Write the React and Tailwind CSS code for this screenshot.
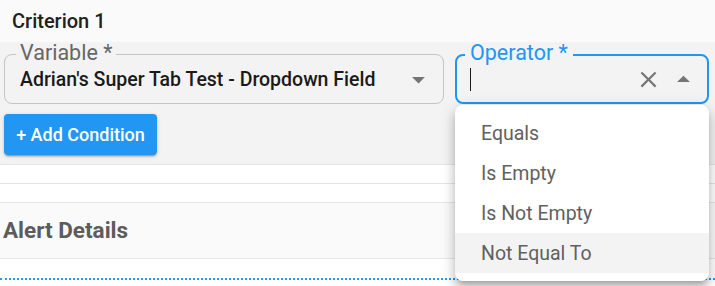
import React from "react";

const CloseIcon = () => (
  <svg width="27" height="27" viewBox="0 0 24 24" fill="#757575">
    <path d="M19 6.41 17.59 5 12 10.59 6.41 5 5 6.41 10.59 12 5 17.59 6.41 19 12 13.41 17.59 19 19 17.59 13.41 12z" />
  </svg>
);

const ArrowUp = () => (
  <svg width="31" height="31" viewBox="0 0 24 24" fill="#757575">
    <path d="m7 14 5-5 5 5z" />
  </svg>
);

const ArrowDown = () => (
  <svg width="31" height="31" viewBox="0 0 24 24" fill="#757575">
    <path d="M7 10l5 5 5-5z" />
  </svg>
);

export default function App() {
  const items = ["Equals", "Is Empty", "Is Not Empty", "Not Equal To"];
  return (
    <div className="relative w-[715px] h-[286px] overflow-hidden bg-white font-['Roboto',sans-serif]">
      <div className="h-[42px] bg-[#fafafa] flex items-center pl-[12px] text-[20px] font-medium text-[#212121]">
        Criterion 1
      </div>
      <div className="bg-[#f3f3f3] h-[123px] px-[4px] pt-[12px] border-b border-[#e6e6e6]">
        <div className="flex gap-[11px]">
          <div className="relative w-[440px] h-[50px] rounded-[8px] border border-[#c4c4c4] flex items-center pl-[15px] pr-[9px]">
            <span className="absolute left-[11px] top-[-13px] px-[4px] bg-[#f3f3f3] text-[21.5px] leading-[22px] text-[#666666]">
              Variable *
            </span>
            <span className="flex-1 text-[19.5px] font-medium text-[#1a1a1a] pt-[2px]">
              Adrian's Super Tab Test - Dropdown Field
            </span>
            <ArrowDown />
          </div>
          <div className="relative w-[254px] h-[50px] rounded-[8px] border-2 border-[#2196f3] flex items-center pl-[13px] pr-[8px]">
            <span className="absolute left-[8px] top-[-14px] px-[5px] bg-[#f3f3f3] text-[21.5px] leading-[22px] text-[#2196f3]">
              Operator *
            </span>
            <div className="w-px h-[23px] bg-[#1a1a1a] mt-[1px]" />
            <div className="flex-1" />
            <CloseIcon />
            <div className="w-[6px]" />
            <ArrowUp />
          </div>
        </div>
        <button className="mt-[10px] h-[41px] w-[153px] rounded-[4px] bg-[#2196f3] text-white text-[18px] font-medium flex items-center justify-center shadow-[0_3px_1px_-2px_rgba(0,0,0,0.2),0_2px_2px_0_rgba(0,0,0,0.14),0_1px_5px_0_rgba(0,0,0,0.12)]">
          + Add Condition
        </button>
      </div>
      <div className="h-[19px] border-b border-[#e6e6e6]" />
      <div className="h-[19px] border-b border-[#e6e6e6]" />
      <div className="h-[56px] bg-[#fafafa] border-b border-[#e6e6e6] flex items-center pl-[3px] text-[22.5px] font-bold text-[#5c5c5c]">
        Alert Details
      </div>
      <div className="h-[19px]" />
      <div className="border-t-2 border-dotted border-[#2196f3]" />

      <div className="absolute left-[455px] top-[105px] w-[254px] rounded-[8px] bg-white py-[8px] shadow-[0_5px_5px_-3px_rgba(0,0,0,0.2),0_8px_10px_1px_rgba(0,0,0,0.14),0_3px_14px_2px_rgba(0,0,0,0.12)]">
        {items.map((it, i) => (
          <div
            key={it}
            className={
              "h-[40px] flex items-center pl-[26px] pt-[2px] text-[19.5px] text-[#616161] " +
              (i === 3 ? "bg-[#f3f3f3]" : "")
            }
          >
            {it}
          </div>
        ))}
      </div>
    </div>
  );
}
